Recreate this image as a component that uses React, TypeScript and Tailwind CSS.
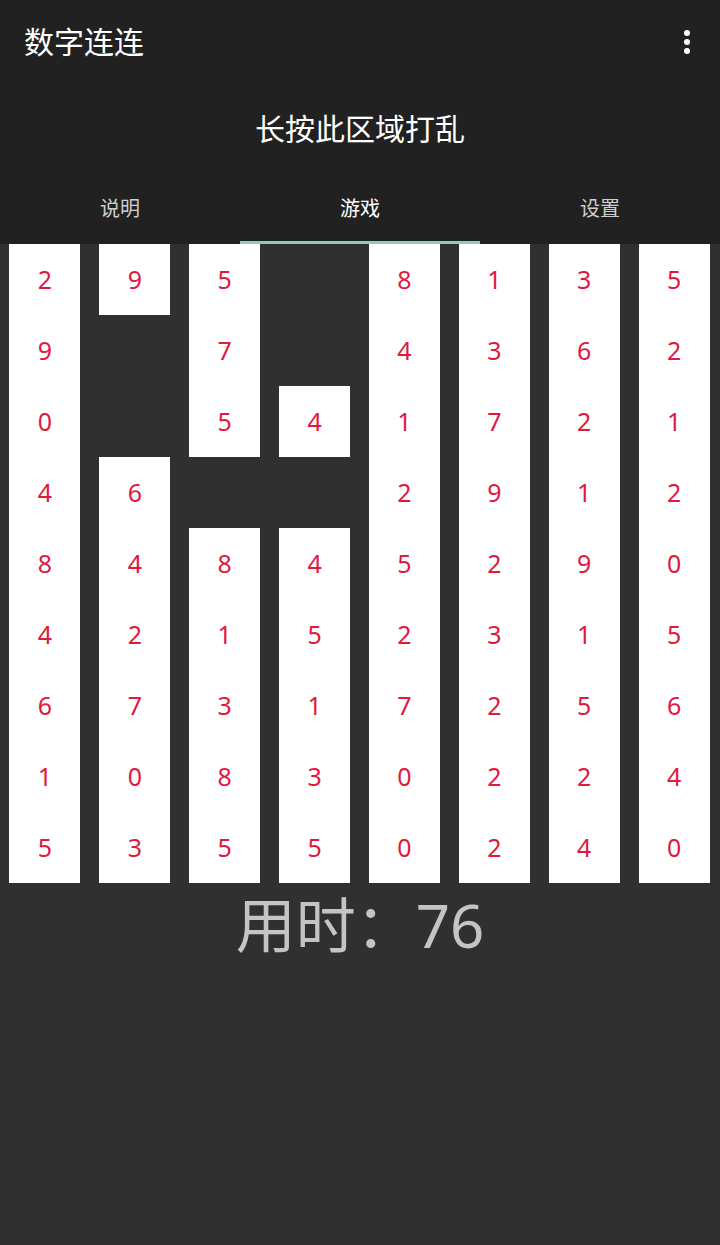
import React from "react";

// Board columns, top to bottom; null marks a cleared slot.
const columns: (number | null)[][] = [
  [2, 9, 0, 4, 8, 4, 6, 1, 5],
  [9, null, null, 6, 4, 2, 7, 0, 3],
  [5, 7, 5, null, 8, 1, 3, 8, 5],
  [null, null, 4, null, 4, 5, 1, 3, 5],
  [8, 4, 1, 2, 5, 2, 7, 0, 0],
  [1, 3, 7, 9, 2, 3, 2, 2, 2],
  [3, 6, 2, 1, 9, 1, 5, 2, 4],
  [5, 2, 1, 2, 0, 5, 6, 4, 0],
];

const cjk = "font-['Noto_Sans','Noto_Sans_CJK_SC',sans-serif]";

function MoreIcon() {
  return (
    <svg width="12" height="30" viewBox="0 0 12 30" className="block">
      <circle cx="6" cy="6" r="3" fill="#ffffff" />
      <circle cx="6" cy="15" r="3" fill="#ffffff" />
      <circle cx="6" cy="24" r="3" fill="#ffffff" />
    </svg>
  );
}

export default function App() {
  return (
    <div className={`w-[720px] h-[1245px] bg-[#303030] flex flex-col ${cjk}`}>
      {/* app bar + shuffle area + tabs */}
      <div className="bg-[#212121] flex flex-col">
        <div className="h-[84px] flex items-center justify-between pl-[24px] pr-[27px]">
          <span className="text-[30px] leading-none text-white">数字连连</span>
          <MoreIcon />
        </div>
        <div className="h-[90px] flex items-center justify-center">
          <span className="text-[30px] leading-none text-white">长按此区域打乱</span>
        </div>
        <div className="h-[70px] grid grid-cols-3">
          <div className="flex items-center justify-center pt-[3px] border-b-[3px] border-transparent">
            <span className="text-[20px] leading-none text-[#cfcfcf]">说明</span>
          </div>
          <div className="flex items-center justify-center pt-[3px] border-b-[3px] border-[#8ccbc3]">
            <span className="text-[20px] leading-none text-white">游戏</span>
          </div>
          <div className="flex items-center justify-center pt-[3px] border-b-[3px] border-transparent">
            <span className="text-[20px] leading-none text-[#cfcfcf]">设置</span>
          </div>
        </div>
      </div>

      {/* board */}
      <div className="grid grid-cols-8 pr-[1px]">
        {columns.map((col, ci) => (
          <div key={ci} className="flex flex-col items-center">
            {col.map((v, ri) =>
              v === null ? (
                <div key={ri} className="w-[71px] h-[71px]" />
              ) : (
                <div
                  key={ri}
                  className="w-[71px] h-[71px] bg-white flex items-center justify-center text-[25px] leading-none text-[#e0193f] font-['Noto_Sans',sans-serif]"
                >
                  {v}
                </div>
              )
            )}
          </div>
        ))}
      </div>

      {/* elapsed time */}
      <div className="flex justify-center pt-[4px]">
        <span className="text-[60px] leading-[76px] text-[#c4c4c4]">用时：76</span>
      </div>
    </div>
  );
}
